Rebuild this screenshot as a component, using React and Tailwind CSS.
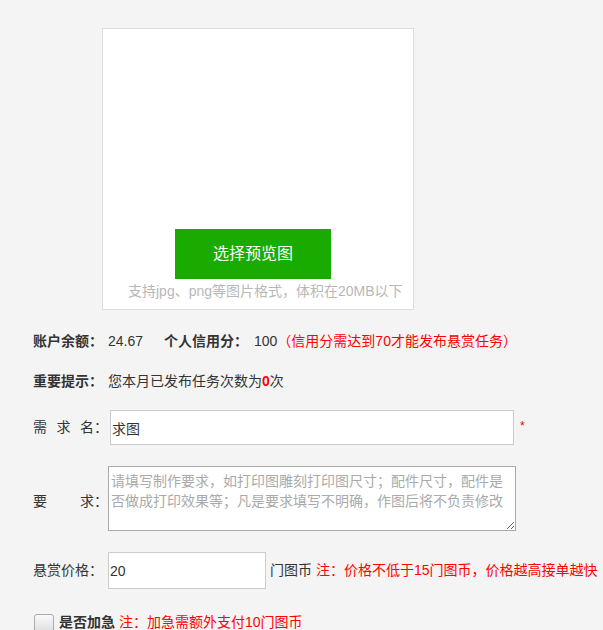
import React from "react";

const App = () => {
  return (
    <div className="min-h-screen bg-[#f4f4f4] pt-[28px] pl-[33px] text-[14px] text-[#333] font-['Liberation_Sans','Noto_Sans_CJK_SC',sans-serif] [text-spacing-trim:space-all]">
      {/* Preview box */}
      <div className="ml-[69px] w-[312px] h-[282px] border border-[#ddd] bg-white flex flex-col items-start pt-[200px]">
        <button className="ml-[72px] w-[156px] h-[50px] bg-[#1aab00] text-white text-[16px] flex items-center justify-center">
          选择预览图
        </button>
        <p className="mt-[2px] ml-[25px] leading-[20px] text-[#b8b8b8] whitespace-nowrap">
          支持jpg、png等图片格式，体积在20MB以下
        </p>
      </div>

      {/* Account info */}
      <div className="mt-[21px] flex leading-[20px] whitespace-nowrap">
        <span className="w-[75px] font-bold">账户余额：</span>
        <span className="w-[56px]">24.67</span>
        <span className="w-[90px] font-bold">个人信用分：</span>
        <span>100</span>
        <span className="text-[#f00]">（信用分需达到70才能发布悬赏任务）</span>
      </div>

      <div className="mt-[20px] flex leading-[20px] whitespace-nowrap">
        <span className="w-[75px] font-bold">重要提示：</span>
        <span>
          您本月已发布任务次数为<b className="text-[#f00]">0</b>次
        </span>
      </div>

      {/* Name */}
      <div className="mt-[19px] flex items-center">
        <span className="w-[75px] flex justify-between">
          <span>需</span>
          <span>求</span>
          <span>名：</span>
        </span>
        <input
          className="ml-[2px] w-[404px] h-[35px] border border-[#ccc] bg-white px-[1px] outline-none"
          defaultValue="求图"
        />
        <span className="ml-[6px] text-[#f00] text-[12px] -mt-[4px]">*</span>
      </div>

      {/* Requirement */}
      <div className="mt-[21px] flex items-center">
        <span className="w-[75px] flex justify-between mt-[5px]">
          <span>要</span>
          <span>求：</span>
        </span>
        <textarea
          className="w-[408px] h-[65px] border border-[#a9a9a9] bg-white px-[2px] pt-[4px] leading-[20px] outline-none placeholder:text-[#aaa]"
          placeholder="请填写制作要求，如打印图雕刻打印图尺寸；配件尺寸，配件是否做成打印效果等；凡是要求填写不明确，作图后将不负责修改"
        />
      </div>

      {/* Price */}
      <div className="mt-[21px] flex items-center whitespace-nowrap">
        <span className="w-[75px]">悬赏价格：</span>
        <input
          className="w-[158px] h-[37px] border border-[#ccc] bg-white px-[1px] outline-none"
          defaultValue="20"
        />
        <span className="ml-[4px]">门图币</span>
        <span className="ml-[4px] text-[#f00]">注：价格不低于15门图币，价格越高接单越快</span>
      </div>

      {/* Urgent */}
      <div className="mt-[23px] flex items-start whitespace-nowrap leading-[20px]">
        <span className="mt-[2px] ml-[1px] w-[20px] h-[20px] rounded-[3px] border border-[#aaa] bg-gradient-to-b from-[#fafafa] to-[#dcdcdc]"></span>
        <span className="ml-[5px] font-bold">是否加急</span>
        <span className="ml-[4px] text-[#f00]">注：加急需额外支付10门图币</span>
      </div>
    </div>
  );
};

export default App;
